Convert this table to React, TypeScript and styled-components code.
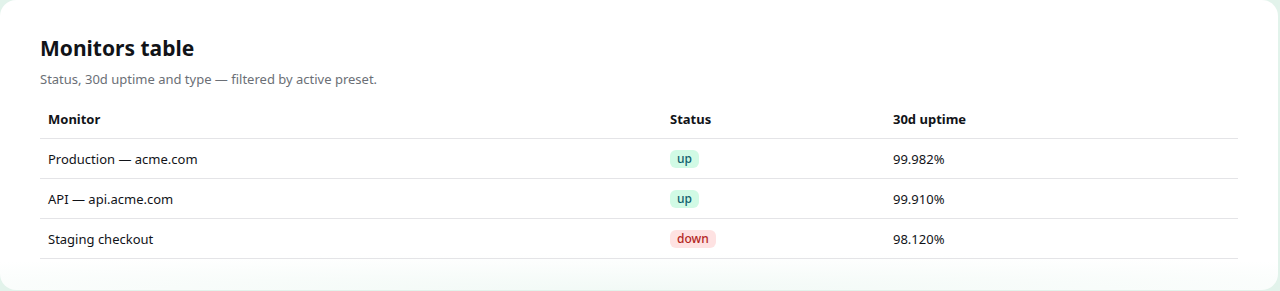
import React from 'react';
import styled, { createGlobalStyle } from 'styled-components';

const GlobalStyle = createGlobalStyle`
  html, body {
    margin: 0;
    padding: 0;
    background: #e2f3eb;
  }
  body {
    font-family: "Noto Sans", "Open Sans", sans-serif;
    color: #111318;
  }
`;

const Card = styled.section`
  box-sizing: border-box;
  width: 1278px;
  height: 290px;
  padding: 34px 40px 0;
  border-radius: 16px;
  background:
    radial-gradient(ellipse 80% 36px at 50% 100%, rgba(226, 243, 235, 0.45), rgba(255, 255, 255, 0) 100%),
    #ffffff;
`;

const Title = styled.h2`
  margin: 0;
  font-size: 21px;
  line-height: 28px;
  font-weight: 700;
  color: #111318;
`;

const Subtitle = styled.p`
  margin: 8px 0 0;
  font-size: 13px;
  line-height: 18px;
  color: #6b6f76;
`;

const Table = styled.div`
  margin-top: 12px;
  display: grid;
  grid-template-columns: 622px 223px 1fr;
`;

const Row = styled.div`
  display: contents;
`;

const Cell = styled.div<{ $head?: boolean }>`
  display: flex;
  align-items: center;
  height: ${p => (p.$head ? 38 : 39)}px;
  padding: 0 8px;
  border-bottom: 1px solid #e4e4e7;
  font-size: 13px;
  font-weight: ${p => (p.$head ? 700 : 400)};
  color: #111318;
`;

const Badge = styled.span<{ $tone: 'up' | 'down' }>`
  display: inline-block;
  padding: 1px 7px 2px;
  border-radius: 6px;
  font-size: 12px;
  line-height: 15px;
  font-weight: 500;
  background: ${p => (p.$tone === 'up' ? '#d1fae5' : '#fee2e2')};
  color: ${p => (p.$tone === 'up' ? '#0f5e6e' : '#b3261e')};
`;

const monitors = [
  { name: 'Production — acme.com', status: 'up' as const, uptime: '99.982%' },
  { name: 'API — api.acme.com', status: 'up' as const, uptime: '99.910%' },
  { name: 'Staging checkout', status: 'down' as const, uptime: '98.120%' },
];

export default function App() {
  return (
    <>
      <GlobalStyle />
      <Card>
        <Title>Monitors table</Title>
        <Subtitle>Status, 30d uptime and type — filtered by active preset.</Subtitle>
        <Table>
          <Row>
            <Cell $head>Monitor</Cell>
            <Cell $head>Status</Cell>
            <Cell $head>30d uptime</Cell>
          </Row>
          {monitors.map(m => (
            <Row key={m.name}>
              <Cell>{m.name}</Cell>
              <Cell>
                <Badge $tone={m.status}>{m.status}</Badge>
              </Cell>
              <Cell>{m.uptime}</Cell>
            </Row>
          ))}
        </Table>
      </Card>
    </>
  );
}
